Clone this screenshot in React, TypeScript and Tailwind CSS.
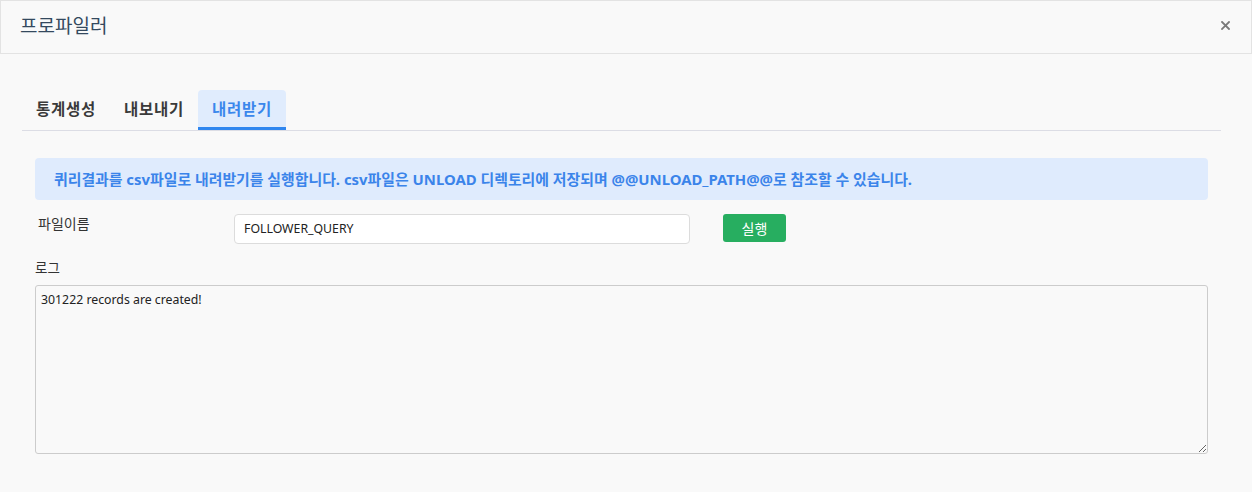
import React from "react";

export default function App() {
  const font = { fontFamily: '"Noto Sans", "Noto Sans CJK KR", sans-serif' };
  return (
    <div className="w-[1252px] h-[492px] bg-[#f9f9f9] overflow-hidden" style={font}>
      <div className="h-[54px] border border-[#e3e3e3] flex items-center justify-between pl-[19px] pr-[21px]">
        <div className="text-[19px] text-[#34495e] -mt-[2px]">프로파일러</div>
        <svg width="9" height="9" viewBox="0 0 9 9" className="-mt-[4px]">
          <path d="M1 1 L8 8 M8 1 L1 8" stroke="#7a7a7a" strokeWidth="1.8" strokeLinecap="square" />
        </svg>
      </div>
      <div className="ml-[22px] mr-[31px] mt-[36px] flex border-b border-[#dcdde5] h-[41px]">
        <div className="w-[88px] h-[40px] flex items-center justify-center text-[15.5px] font-semibold tracking-[0.8px] text-[#3a3a3a]">통계생성</div>
        <div className="w-[88px] h-[40px] flex items-center justify-center text-[15.5px] font-semibold tracking-[0.8px] text-[#3a3a3a]">내보내기</div>
        <div className="w-[88px] h-[40px] flex items-center justify-center text-[15.5px] font-semibold tracking-[0.8px] text-[#3a87ec] bg-[#e0ecfd] rounded-t-[4px] border-b-[3px] border-[#2f86ef] pt-[2px]">내려받기</div>
      </div>
      <div className="ml-[35px] mr-[44px]">
        <div className="mt-[27px] h-[42px] bg-[#dfebfd] rounded-[4px] flex items-center pl-[19px] text-[14.9px] font-bold text-[#3b84ea]">
          퀴리결과를 csv파일로 내려받기를 실행합니다. csv파일은 UNLOAD 디렉토리에 저장되며 @@UNLOAD_PATH@@로 참조할 수 있습니다.
        </div>
        <div className="flex mt-[14px] h-[30px]">
          <div className="w-[199px] pl-[3px] text-[14px] text-[#333] -mt-[1px]">파일이름</div>
          <div className="w-[456px] h-[30px] bg-white border border-[#dcdcdc] rounded-[4px] flex items-center pl-[9px] text-[12.3px] text-[#222]">
            FOLLOWER_QUERY
          </div>
          <div className="ml-[33px] w-[63px] h-[28px] bg-[#27ae60] rounded-[3px] flex items-center justify-center text-[14px] text-white">실행</div>
        </div>
        <div className="mt-[14px] text-[13.5px] text-[#333] leading-[20px]">로그</div>
        <textarea
          className="mt-[7px] block w-full h-[169px] border border-[#cccccc] rounded-[3px] bg-[#f9f9f9] px-[5px] py-[5px] text-[12.3px] text-[#222] outline-none"
          style={font}
          defaultValue="301222 records are created!"
        />
      </div>
    </div>
  );
}
